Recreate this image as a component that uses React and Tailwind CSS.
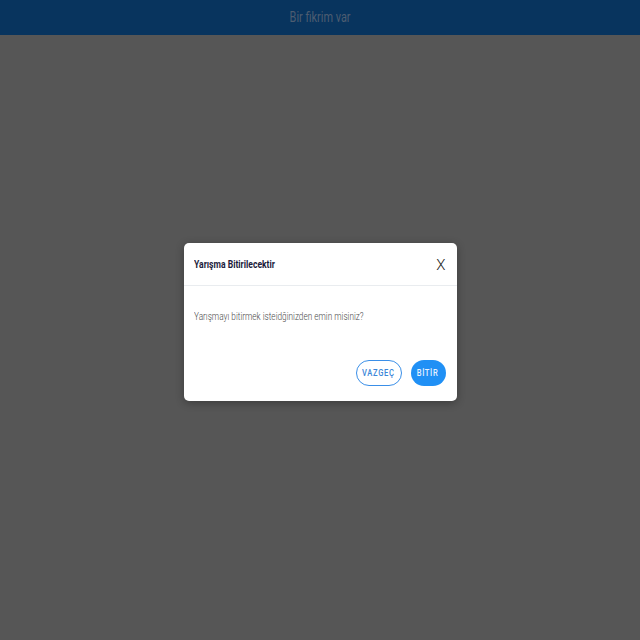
export default function App() {
  const cond = { fontFamily: "Roboto, 'Liberation Sans', sans-serif" };
  return (
    <div className="relative w-[640px] h-[640px] bg-[#565656] overflow-hidden" style={cond}>
      <div className="h-[35px] bg-[#08345e] flex items-center justify-center">
        <span className="text-[14px] text-[#4d5d71] inline-block scale-x-[0.78]">Bir fikrim var</span>
      </div>
      <div className="absolute inset-0 flex items-center justify-center">
        <div className="w-[273px] h-[158px] bg-white rounded-[5px] shadow-[0_2px_8px_rgba(0,0,0,0.3)] flex flex-col mt-[4px]">
          <div className="h-[43px] flex items-center justify-between pl-[10px] pr-[11px] pt-[3px] border-b border-[#e9ecef]">
            <span className="text-[11px] font-bold text-[#1c1c3c] inline-block scale-x-[0.78] origin-left whitespace-nowrap">Yarışma Bitirilecektir</span>
            <span className="text-[15px] font-light text-[#222] leading-none">X</span>
          </div>
          <div className="pl-[10px] pt-[17px] h-[74px]">
            <span className="text-[11px] font-light text-[#4a4a4a] inline-block scale-x-[0.75] origin-left whitespace-nowrap">Yarışmayı bitirmek isteidğinizden emin misiniz?</span>
          </div>
          <div className="flex justify-end gap-[9px] pr-[11px]">
            <div className="w-[46px] h-[26px] rounded-full border border-[#3a8fe8] text-[#3a86d8] flex items-center justify-center">
              <span className="text-[9.5px] font-medium tracking-[0.8px] inline-block scale-x-[0.8]">VAZGEÇ</span>
            </div>
            <div className="w-[35px] h-[26px] rounded-full bg-[#2090f5] text-[#e8f2ff] flex items-center justify-center">
              <span className="text-[9.5px] font-medium tracking-[0.8px] inline-block scale-x-[0.8]">BİTİR</span>
            </div>
          </div>
        </div>
      </div>
    </div>
  );
}
